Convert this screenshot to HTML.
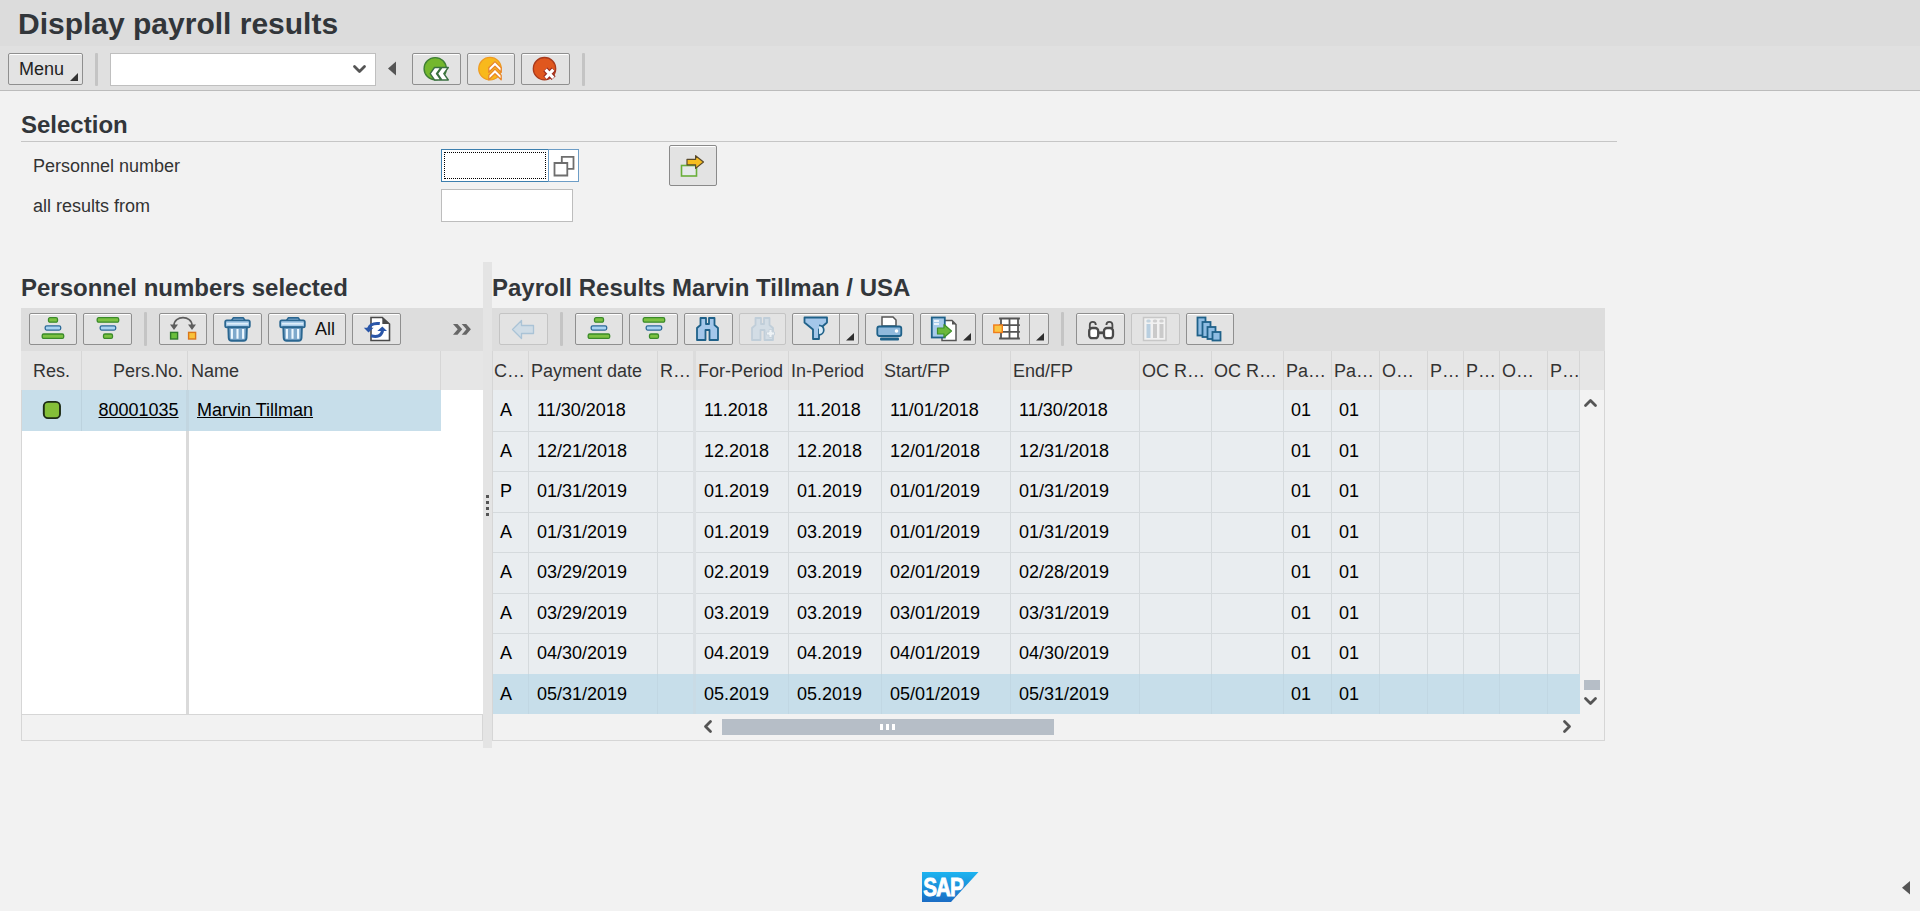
<!DOCTYPE html>
<html><head><meta charset="utf-8">
<style>
html,body{margin:0;padding:0;width:1920px;height:911px;overflow:hidden;background:#f2f2f2;font-family:"Liberation Sans",sans-serif;}
.a{position:absolute;}
.t{position:absolute;white-space:nowrap;line-height:20px;font-size:18px;}
.btn{position:absolute;box-sizing:border-box;border:1px solid #8f8f8f;background:#e3e3e3;border-radius:2px;box-shadow:inset 0 1px 0 #fff;}
.dis{border-color:#c4c4c4;box-shadow:none;}
.sep{position:absolute;width:3px;background:#c4c4c4;border-radius:1px;}
svg{position:absolute;overflow:visible}
.hd{color:#333;}
.dt{color:#000;}
</style></head>
<body>
<div class="a" style="left:0px;top:0px;width:1920px;height:46px;background:#dcdcdc"></div>
<div class="a" style="left:0px;top:46px;width:1920px;height:44px;background:#e0e0e0"></div>
<div class="a" style="left:0px;top:90px;width:1920px;height:1px;background:#bcbcbc"></div>
<div class="t" style="left:18px;top:7px;font-size:30px;line-height:34px;font-weight:bold;color:#32363a">Display payroll results</div>
<div class="btn" style="left:8px;top:53px;width:75px;height:32px;"></div>
<div class="t" style="left:19px;top:59px;color:#222">Menu</div>
<svg style="left:70px;top:73px" width="9" height="9" viewBox="0 0 9 9"><path d="M8 0 L8 8 L0 8 Z" fill="#333"/></svg>
<div class="sep" style="left:95px;top:53px;height:33px"></div>
<div class="a" style="left:110px;top:53px;width:266px;height:33px;box-sizing:border-box;border:1px solid #bfbfbf;background:#fff"></div>
<svg style="left:353px;top:65px" width="14" height="10" viewBox="0 0 14 10"><path d="M1.5 1.5 L6.5 6.5 L11.5 1.5" fill="none" stroke="#555" stroke-width="2.8" stroke-linecap="round" stroke-linejoin="round"/></svg>
<svg style="left:387px;top:61px" width="10" height="16" viewBox="0 0 10 16"><path d="M9 0.5 L9 14.5 L1 7.5 Z" fill="#555"/></svg>
<div class="btn" style="left:412px;top:53px;width:49px;height:32px;"></div>
<div class="btn" style="left:467px;top:53px;width:48px;height:32px;"></div>
<div class="btn" style="left:521px;top:53px;width:49px;height:32px;"></div>
<div class="sep" style="left:582px;top:53px;height:33px"></div>
<svg style="left:422px;top:55px" width="28" height="28" viewBox="0 0 28 28"><circle cx="13.2" cy="13.7" r="11.1" fill="#74b72d" stroke="#3f7f35" stroke-width="1.4"/>
<path d="M8.2 18.7 L12.5 12.5 L19 12.5 L14.5 18.7 L19 25 L12.5 25 Z M15.5 18.7 L19.8 12.5 L26.3 12.5 L21.8 18.7 L26.3 25 L19.8 25 Z" fill="#fff" stroke="#3a7040" stroke-width="1.4" stroke-linejoin="round"/></svg>
<svg style="left:476px;top:55px" width="28" height="28" viewBox="0 0 28 28"><circle cx="14" cy="13.7" r="11.3" fill="#f8b91c" stroke="#ee9a22" stroke-width="1.2"/>
<path d="M12.8 17.3 V12.8 L19 6.6 L25.2 12.8 V17.3 L19 11.2 Z M12.8 24.8 V20.3 L19 14.1 L25.2 20.3 V24.8 L19 18.7 Z" fill="#fff" stroke="#e8862a" stroke-width="1.3" stroke-linejoin="round"/></svg>
<svg style="left:531px;top:55px" width="28" height="28" viewBox="0 0 28 28"><circle cx="13.5" cy="13.7" r="11.2" fill="#e0571e" stroke="#a83a1c" stroke-width="1.3"/>
<path d="M14.3 14.3 L22.6 23.2 M22.6 14.3 L14.3 23.2" stroke="#9a2a1e" stroke-width="5.6"/>
<path d="M14.6 14.7 L22.3 22.8 M22.3 14.7 L14.6 22.8" stroke="#fff" stroke-width="3.2"/></svg>
<div class="t" style="left:21px;top:111px;font-size:24px;line-height:28px;font-weight:bold;color:#32363a">Selection</div>
<div class="a" style="left:21px;top:141px;width:1596px;height:1px;background:#c6c6c6"></div>
<div class="t" style="left:33px;top:156px;color:#333">Personnel number</div>
<div class="t" style="left:33px;top:196px;color:#333">all results from</div>
<div class="a" style="left:441px;top:149px;width:108px;height:33px;box-sizing:border-box;border:1px solid #3d7fae;background:#fff"></div>
<div class="a" style="left:444px;top:152px;width:102px;height:27px;box-sizing:border-box;border:1px dotted #000"></div>
<div class="a" style="left:548px;top:149px;width:31px;height:33px;box-sizing:border-box;border:1px solid #6d9dc6;background:#fff"></div>
<svg style="left:552px;top:154px" width="24" height="24" viewBox="0 0 24 24"><path d="M2.5 9 H15.3 V21.5 H2.5 Z" fill="none" stroke="#6e6e6e" stroke-width="1.8"/><path d="M9.8 8.5 V2.8 H21.5 V14.8 H15.8" fill="none" stroke="#6e6e6e" stroke-width="1.8"/></svg>
<div class="a" style="left:441px;top:189px;width:132px;height:33px;box-sizing:border-box;border:1px solid #bdbdbd;background:#fff"></div>
<div class="btn" style="left:669px;top:145px;width:48px;height:41px;border-color:#8a8a8a"></div>
<svg style="left:678px;top:152px" width="30" height="30" viewBox="0 0 30 30"><rect x="3.5" y="13.5" width="15" height="10.5" fill="#e6e9ec" stroke="#6aae3a" stroke-width="1.6"/>
<path d="M9 7.3 H17.6 V3.7 L25.5 10 L17.6 16.4 V12.8 H9 Z" fill="#f7bd1f" stroke="#5a4a2a" stroke-width="1.2" stroke-linejoin="round"/></svg>
<div class="t" style="left:21px;top:274px;font-size:24px;line-height:28px;font-weight:bold;color:#32363a">Personnel numbers selected</div>
<div class="a" style="left:21px;top:308px;width:462px;height:43px;background:#dddddd"></div>
<div class="btn" style="left:29px;top:313px;width:48px;height:32px;"></div>
<div class="btn" style="left:83px;top:313px;width:49px;height:32px;"></div>
<div class="sep" style="left:144px;top:312px;height:34px"></div>
<div class="btn" style="left:159px;top:313px;width:48px;height:32px;"></div>
<div class="btn" style="left:213px;top:313px;width:49px;height:32px;"></div>
<div class="btn" style="left:268px;top:313px;width:78px;height:32px;"></div>
<div class="btn" style="left:352px;top:313px;width:49px;height:32px;"></div>
<div class="t" style="left:315px;top:319px;color:#111">All</div>
<svg style="left:41px;top:316px" width="24" height="24" viewBox="0 0 24 24"><rect x="7.5" y="1.7" width="9" height="4.5" rx="1.5" fill="#7cc142" stroke="#3a8a29" stroke-width="1.3"/>
<rect x="4.2" y="9.8" width="15.5" height="4.3" rx="1.5" fill="#a9d3f2" stroke="#2c6a98" stroke-width="1.3"/>
<rect x="1.2" y="18" width="21.5" height="4.4" rx="1.5" fill="#7cc142" stroke="#3a8a29" stroke-width="1.3"/></svg>
<svg style="left:96px;top:316px" width="24" height="24" viewBox="0 0 24 24"><rect x="1.2" y="1.7" width="21.5" height="4.5" rx="1.5" fill="#7cc142" stroke="#3a8a29" stroke-width="1.3"/>
<rect x="4.2" y="9.8" width="15.5" height="4.3" rx="1.5" fill="#a9d3f2" stroke="#2c6a98" stroke-width="1.3"/>
<rect x="7.5" y="18" width="9" height="4.4" rx="1.5" fill="#7cc142" stroke="#3a8a29" stroke-width="1.3"/></svg>
<svg style="left:168px;top:315px" width="30" height="26" viewBox="0 0 30 26"><path d="M6 10.5 C6 0 24 0 24 10.5" fill="none" stroke="#5e5e5e" stroke-width="1.8"/>
<path d="M2 9.5 L10 9.5 L6 15 Z M20 9.5 L28 9.5 L24 15 Z" fill="#5e5e5e"/>
<rect x="2.6" y="17.4" width="7" height="6.6" fill="#6abf3c" stroke="#2f7a2a" stroke-width="1.4"/>
<rect x="20.6" y="17.4" width="7" height="6.6" fill="#f9c23a" stroke="#d9761a" stroke-width="1.4"/></svg>
<svg style="left:224px;top:317px" width="27" height="25" viewBox="0 0 27 25"><path d="M7.5 3.6 L9.3 0.9 H19.3 L21.1 3.6" fill="#9cc2e4" stroke="#2a6690" stroke-width="1.7" stroke-linejoin="round"/>
<rect x="1.2" y="3.3" width="24.6" height="7" rx="1.6" fill="#a9cbe8" stroke="#2a6690" stroke-width="1.8"/>
<path d="M2.8 6.8 H24.2" stroke="#e4f2fc" stroke-width="1.4"/>
<path d="M4.3 10.3 H22.9 L22.5 21 Q22.3 23.8 19.5 23.8 H7.7 Q4.9 23.8 4.7 21 Z" fill="#7fa9cc" stroke="#2a6690" stroke-width="1.9"/>
<path d="M7.9 12 V21.8 M13.5 12 V21.8 M19.1 12 V21.8" stroke="#eef8ff" stroke-width="2.1"/></svg>
<svg style="left:279px;top:317px" width="27" height="25" viewBox="0 0 27 25"><path d="M7.5 3.6 L9.3 0.9 H19.3 L21.1 3.6" fill="#9cc2e4" stroke="#2a6690" stroke-width="1.7" stroke-linejoin="round"/>
<rect x="1.2" y="3.3" width="24.6" height="7" rx="1.6" fill="#a9cbe8" stroke="#2a6690" stroke-width="1.8"/>
<path d="M2.8 6.8 H24.2" stroke="#e4f2fc" stroke-width="1.4"/>
<path d="M4.3 10.3 H22.9 L22.5 21 Q22.3 23.8 19.5 23.8 H7.7 Q4.9 23.8 4.7 21 Z" fill="#7fa9cc" stroke="#2a6690" stroke-width="1.9"/>
<path d="M7.9 12 V21.8 M13.5 12 V21.8 M19.1 12 V21.8" stroke="#eef8ff" stroke-width="2.1"/></svg>
<svg style="left:362px;top:316px" width="30" height="26" viewBox="0 0 30 26"><path d="M9 1.5 H20.3 L27.5 8 V24.5 H9 Z" fill="#fff" stroke="#4a4a4a" stroke-width="1.6" stroke-linejoin="miter"/>
<path d="M20.3 1.5 V8 H27.5 Z" fill="#4a4a4a"/>
<path d="M17.8 7.6 Q8.5 6.5 6.6 12.5" fill="none" stroke="#2a56a8" stroke-width="3"/>
<path d="M1.8 11.8 L11.6 11.8 L6.5 16.6 Z" fill="#2a56a8"/>
<path d="M9 19.8 Q18.5 22.5 20.6 14.8" fill="none" stroke="#2a56a8" stroke-width="3"/>
<path d="M15.3 15 L25 15 L20.3 10.6 Z" fill="#2a56a8"/></svg>
<svg style="left:452px;top:323px" width="20" height="13" viewBox="0 0 20 13"><path d="M1 1 H5.5 L10.2 6.3 L5.5 11.7 H1 L5.7 6.3 Z M9.7 1 H14.2 L18.9 6.3 L14.2 11.7 H9.7 L14.4 6.3 Z" fill="#666"/></svg>
<div class="a" style="left:21px;top:351px;width:462px;height:39px;background:#e6e6e6"></div>
<div class="a" style="left:81px;top:351px;width:1px;height:39px;background:#d6d6d6"></div>
<div class="a" style="left:187px;top:351px;width:1px;height:39px;background:#d6d6d6"></div>
<div class="a" style="left:440px;top:351px;width:1px;height:39px;background:#d6d6d6"></div>
<div class="t" style="left:33px;top:361px;color:#333">Res.</div>
<div class="t" style="left:113px;top:361px;color:#333">Pers.No.</div>
<div class="t" style="left:191px;top:361px;color:#333">Name</div>
<div class="a" style="left:21px;top:390px;width:420px;height:41px;background:#c7deea"></div>
<div class="a" style="left:81px;top:390px;width:1px;height:41px;background:#bcd2de"></div>
<div class="a" style="left:186px;top:390px;width:3px;height:41px;background:#c2d6e1"></div>
<svg style="left:41px;top:399px" width="22" height="22" viewBox="0 0 22 22"><rect x="2.8" y="2.9" width="16.2" height="16.2" rx="4.2" fill="#84bf38" stroke="#1e2c16" stroke-width="1.9"/></svg>
<div class="t" style="left:98.5px;top:400px;color:#000;text-decoration:underline">80001035</div>
<div class="t" style="left:197px;top:400px;color:#000;text-decoration:underline">Marvin Tillman</div>
<div class="a" style="left:21px;top:431px;width:462px;height:283px;background:#fff"></div>
<div class="a" style="left:441px;top:390px;width:42px;height:41px;background:#fff"></div>
<div class="a" style="left:186px;top:431px;width:3px;height:283px;background:#dadada"></div>
<div class="a" style="left:21px;top:714px;width:462px;height:27px;box-sizing:border-box;border:1px solid #d6d6d6;background:#f2f2f2"></div>
<div class="a" style="left:21px;top:390px;width:1px;height:324px;background:#d6d6d6"></div>
<div class="a" style="left:483px;top:262px;width:9px;height:486px;background:#e4e4e4"></div>
<div class="a" style="left:486px;top:495px;width:3px;height:3px;background:#555"></div>
<div class="a" style="left:486px;top:501px;width:3px;height:3px;background:#555"></div>
<div class="a" style="left:486px;top:507px;width:3px;height:3px;background:#555"></div>
<div class="a" style="left:486px;top:513px;width:3px;height:3px;background:#555"></div>
<div class="t" style="left:492px;top:274px;font-size:24px;line-height:28px;font-weight:bold;color:#32363a">Payroll Results Marvin Tillman / USA</div>
<div class="a" style="left:492px;top:308px;width:1113px;height:43px;background:#dddddd"></div>
<div class="btn dis" style="left:499px;top:313px;width:49px;height:32px;"></div>
<svg style="left:510px;top:318px" width="28" height="24" viewBox="0 0 28 24"><path d="M2.5 11.5 L11.5 2.5 V7.5 H23.5 V15.5 H11.5 V20.5 Z" fill="#cfdce6" stroke="#aac3d6" stroke-width="1.3" stroke-linejoin="round"/></svg>
<div class="sep" style="left:560px;top:312px;height:34px"></div>
<div class="btn" style="left:575px;top:313px;width:48px;height:32px;"></div>
<div class="btn" style="left:629px;top:313px;width:49px;height:32px;"></div>
<div class="btn" style="left:684px;top:313px;width:49px;height:32px;"></div>
<div class="btn dis" style="left:739px;top:313px;width:47px;height:32px;"></div>
<div class="btn" style="left:792px;top:313px;width:67px;height:32px;"></div>
<div class="a" style="left:839px;top:314px;width:1px;height:30px;background:#9a9a9a"></div>
<div class="btn" style="left:865px;top:313px;width:49px;height:32px;"></div>
<div class="btn" style="left:920px;top:313px;width:56px;height:32px;"></div>
<div class="btn" style="left:982px;top:313px;width:67px;height:32px;"></div>
<div class="a" style="left:1029px;top:314px;width:1px;height:30px;background:#9a9a9a"></div>
<div class="sep" style="left:1061px;top:312px;height:34px"></div>
<div class="btn" style="left:1076px;top:313px;width:49px;height:32px;"></div>
<div class="btn dis" style="left:1131px;top:313px;width:49px;height:32px;"></div>
<div class="btn" style="left:1186px;top:313px;width:48px;height:32px;"></div>
<svg style="left:587px;top:316px" width="24" height="24" viewBox="0 0 24 24"><rect x="7.5" y="1.7" width="9" height="4.5" rx="1.5" fill="#7cc142" stroke="#3a8a29" stroke-width="1.3"/>
<rect x="4.2" y="9.8" width="15.5" height="4.3" rx="1.5" fill="#a9d3f2" stroke="#2c6a98" stroke-width="1.3"/>
<rect x="1.2" y="18" width="21.5" height="4.4" rx="1.5" fill="#7cc142" stroke="#3a8a29" stroke-width="1.3"/></svg>
<svg style="left:642px;top:316px" width="24" height="24" viewBox="0 0 24 24"><rect x="1.2" y="1.7" width="21.5" height="4.5" rx="1.5" fill="#7cc142" stroke="#3a8a29" stroke-width="1.3"/>
<rect x="4.2" y="9.8" width="15.5" height="4.3" rx="1.5" fill="#a9d3f2" stroke="#2c6a98" stroke-width="1.3"/>
<rect x="7.5" y="18" width="9" height="4.4" rx="1.5" fill="#7cc142" stroke="#3a8a29" stroke-width="1.3"/></svg>
<svg style="left:696px;top:317px" width="24" height="25" viewBox="0 0 24 25"><path d="M4.5 1 H10 V7 H13 V1 H18.5 V8 L22 11 V23 H13.5 V13 H9.5 V23 H1 V11 L4.5 8 Z" fill="#a4c7ea" stroke="#1f6189" stroke-width="1.8" stroke-linejoin="round"/></svg>
<svg style="left:751px;top:317px" width="26" height="25" viewBox="0 0 26 25"><path d="M4.5 1 H10 V7 H13 V1 H18.5 V8 L22 11 V23 H13.5 V13 H9.5 V23 H1 V11 L4.5 8 Z" fill="#d3dde5" stroke="#c0ced9" stroke-width="1.8" stroke-linejoin="round"/><path d="M15.5 15 H18 V12.5 H21 V15 H23.5 V18 H21 V20.5 H18 V18 H15.5 Z" fill="#eef2f5" stroke="#c8d3dc" stroke-width="1"/></svg>
<svg style="left:803px;top:316px" width="26" height="26" viewBox="0 0 26 26"><path d="M1.5 1.5 H24 V6.5 L16 13.5 V23 H10 V13.5 L1.5 6.5 Z" fill="#a4c7ea" stroke="#1f6189" stroke-width="1.8" stroke-linejoin="round"/>
<path d="M16 9.3 A4.8 4.8 0 0 1 16 18.9" fill="#d8ebf8" stroke="#1f6189" stroke-width="1.7"/></svg>
<svg style="left:846px;top:333px" width="9" height="9" viewBox="0 0 9 9"><path d="M8 0 L8 7.5 L0 7.5 Z" fill="#2d2d2d"/></svg>
<svg style="left:876px;top:316px" width="27" height="26" viewBox="0 0 27 26"><path d="M6 1 H17 L20 4 V10 H6 Z" fill="#fff" stroke="#555" stroke-width="1.5"/>
<rect x="1.3" y="10.5" width="24" height="9.5" rx="2" fill="#8fb9dc" stroke="#1f6189" stroke-width="1.8"/>
<circle cx="20.5" cy="15" r="1.8" fill="#fff"/>
<rect x="4" y="21.5" width="19" height="3" rx="1" fill="#1f6189"/></svg>
<svg style="left:930px;top:316px" width="28" height="26" viewBox="0 0 28 26"><path d="M12 4.5 H22 L26 8.5 V24.5 H12 Z" fill="#fff" stroke="#555" stroke-width="1.5"/>
<path d="M22 4.5 V8.5 H26 Z" fill="#555"/>
<rect x="1.8" y="1.5" width="13" height="20" fill="#a7cbea" stroke="#1f6189" stroke-width="1.8"/>
<path d="M4 5 H9 M4 8 H9" stroke="#fff" stroke-width="1.4"/>
<path d="M7.5 12 H14 V8.5 L21.5 15 L14 21.5 V18 H7.5 Z" fill="#6bb83a" stroke="#3f8f2a" stroke-width="1.2" stroke-linejoin="round"/></svg>
<svg style="left:963px;top:333px" width="9" height="9" viewBox="0 0 9 9"><path d="M8 0 L8 7.5 L0 7.5 Z" fill="#2d2d2d"/></svg>
<svg style="left:992px;top:317px" width="28" height="24" viewBox="0 0 28 24"><rect x="9" y="1.5" width="17" height="20" fill="#fff"/>
<path d="M8 1.5 H27 M8 8.2 H27 M8 14.8 H27 M8 21.5 H27 M9 1.5 V21.5 M17.5 1.5 V21.5 M26 1.5 V21.5" stroke="#555" stroke-width="1.8" fill="none" stroke-linecap="square"/>
<rect x="1.8" y="8" width="8.5" height="7.5" fill="#fac645" stroke="#f07d1a" stroke-width="1.4"/></svg>
<svg style="left:1036px;top:333px" width="9" height="9" viewBox="0 0 9 9"><path d="M8 0 L8 7.5 L0 7.5 Z" fill="#2d2d2d"/></svg>
<svg style="left:1087px;top:320px" width="28" height="21" viewBox="0 0 28 21"><rect x="2.2" y="8" width="9" height="10.2" rx="3" fill="#fff" stroke="#4a4a4a" stroke-width="2.3"/>
<rect x="17" y="8" width="9" height="10.2" rx="3" fill="#fff" stroke="#4a4a4a" stroke-width="2.3"/>
<rect x="11" y="11.4" width="6.5" height="2.8" fill="#4a4a4a"/>
<path d="M2.8 8 V4.8 Q2.8 1.9 5.8 1.9 Q8.8 1.9 8.8 5" fill="none" stroke="#4a4a4a" stroke-width="1.8"/>
<path d="M25.4 8 V4.8 Q25.4 1.9 22.4 1.9 Q19.4 1.9 19.4 5" fill="none" stroke="#4a4a4a" stroke-width="1.8"/></svg>
<svg style="left:1142px;top:316px" width="26" height="26" viewBox="0 0 26 26"><rect x="1.5" y="1.5" width="22.5" height="23" fill="#f1f1f1" stroke="#c7c7c7" stroke-width="1.5"/>
<rect x="4.5" y="8" width="4" height="14" fill="#b9cfe0"/><rect x="11" y="8" width="4" height="14" fill="#cacaca"/><rect x="17.5" y="8" width="4" height="14" fill="#cacaca"/>
<rect x="4.3" y="3.6" width="4.4" height="3" rx="1.5" fill="#c3d3de"/><rect x="10.8" y="3.6" width="4.4" height="3" rx="1.5" fill="#cfcfcf"/><rect x="17.3" y="3.6" width="4.4" height="3" rx="1.5" fill="#cfcfcf"/></svg>
<svg style="left:1196px;top:316px" width="27" height="26" viewBox="0 0 27 26"><rect x="1.5" y="1.5" width="8" height="18" fill="#8fbde3" stroke="#1f6189" stroke-width="1.8"/>
<rect x="6.5" y="6" width="8" height="15" fill="#8fbde3" stroke="#1f6189" stroke-width="1.8"/>
<rect x="11.5" y="11" width="8" height="12" fill="#8fbde3" stroke="#1f6189" stroke-width="1.8"/>
<rect x="16.5" y="16" width="8" height="8.5" fill="#8fbde3" stroke="#1f6189" stroke-width="1.8"/></svg>
<div class="a" style="left:492px;top:351px;width:1113px;height:39px;background:#e6e6e6"></div>
<div class="a" style="left:528px;top:351px;width:1px;height:39px;background:#d6d6d6"></div>
<div class="a" style="left:657px;top:351px;width:1px;height:39px;background:#d6d6d6"></div>
<div class="a" style="left:693px;top:351px;width:3px;height:39px;background:#dcdcdc"></div>
<div class="a" style="left:788px;top:351px;width:1px;height:39px;background:#d6d6d6"></div>
<div class="a" style="left:881px;top:351px;width:1px;height:39px;background:#d6d6d6"></div>
<div class="a" style="left:1010px;top:351px;width:1px;height:39px;background:#d6d6d6"></div>
<div class="a" style="left:1139px;top:351px;width:1px;height:39px;background:#d6d6d6"></div>
<div class="a" style="left:1211px;top:351px;width:1px;height:39px;background:#d6d6d6"></div>
<div class="a" style="left:1283px;top:351px;width:1px;height:39px;background:#d6d6d6"></div>
<div class="a" style="left:1331px;top:351px;width:1px;height:39px;background:#d6d6d6"></div>
<div class="a" style="left:1379px;top:351px;width:1px;height:39px;background:#d6d6d6"></div>
<div class="a" style="left:1427px;top:351px;width:1px;height:39px;background:#d6d6d6"></div>
<div class="a" style="left:1463px;top:351px;width:1px;height:39px;background:#d6d6d6"></div>
<div class="a" style="left:1499px;top:351px;width:1px;height:39px;background:#d6d6d6"></div>
<div class="a" style="left:1547px;top:351px;width:1px;height:39px;background:#d6d6d6"></div>
<div class="a" style="left:1579px;top:351px;width:1px;height:39px;background:#d6d6d6"></div>
<div class="t" style="left:494px;top:361px;color:#333">C…</div>
<div class="t" style="left:531px;top:361px;color:#333">Payment date</div>
<div class="t" style="left:660px;top:361px;color:#333">R…</div>
<div class="t" style="left:698px;top:361px;color:#333">For-Period</div>
<div class="t" style="left:791px;top:361px;color:#333">In-Period</div>
<div class="t" style="left:884px;top:361px;color:#333">Start/FP</div>
<div class="t" style="left:1013px;top:361px;color:#333">End/FP</div>
<div class="t" style="left:1142px;top:361px;color:#333">OC R…</div>
<div class="t" style="left:1214px;top:361px;color:#333">OC R…</div>
<div class="t" style="left:1286px;top:361px;color:#333">Pa…</div>
<div class="t" style="left:1334px;top:361px;color:#333">Pa…</div>
<div class="t" style="left:1382px;top:361px;color:#333">O…</div>
<div class="t" style="left:1430px;top:361px;color:#333">P…</div>
<div class="t" style="left:1466px;top:361px;color:#333">P…</div>
<div class="t" style="left:1502px;top:361px;color:#333">O…</div>
<div class="t" style="left:1550px;top:361px;color:#333">P…</div>
<div class="a" style="left:492px;top:390px;width:1088px;height:324px;background:#e9edf0"></div>
<div class="t" style="left:500px;top:400px;color:#000">A</div>
<div class="t" style="left:537px;top:400px;color:#000">11/30/2018</div>
<div class="t" style="left:704px;top:400px;color:#000">11.2018</div>
<div class="t" style="left:797px;top:400px;color:#000">11.2018</div>
<div class="t" style="left:890px;top:400px;color:#000">11/01/2018</div>
<div class="t" style="left:1019px;top:400px;color:#000">11/30/2018</div>
<div class="t" style="left:1291px;top:400px;color:#000">01</div>
<div class="t" style="left:1339px;top:400px;color:#000">01</div>
<div class="a" style="left:492px;top:431px;width:1088px;height:1px;background:#d5dadd"></div>
<div class="t" style="left:500px;top:441px;color:#000">A</div>
<div class="t" style="left:537px;top:441px;color:#000">12/21/2018</div>
<div class="t" style="left:704px;top:441px;color:#000">12.2018</div>
<div class="t" style="left:797px;top:441px;color:#000">12.2018</div>
<div class="t" style="left:890px;top:441px;color:#000">12/01/2018</div>
<div class="t" style="left:1019px;top:441px;color:#000">12/31/2018</div>
<div class="t" style="left:1291px;top:441px;color:#000">01</div>
<div class="t" style="left:1339px;top:441px;color:#000">01</div>
<div class="a" style="left:492px;top:471px;width:1088px;height:1px;background:#d5dadd"></div>
<div class="t" style="left:500px;top:481px;color:#000">P</div>
<div class="t" style="left:537px;top:481px;color:#000">01/31/2019</div>
<div class="t" style="left:704px;top:481px;color:#000">01.2019</div>
<div class="t" style="left:797px;top:481px;color:#000">01.2019</div>
<div class="t" style="left:890px;top:481px;color:#000">01/01/2019</div>
<div class="t" style="left:1019px;top:481px;color:#000">01/31/2019</div>
<div class="t" style="left:1291px;top:481px;color:#000">01</div>
<div class="t" style="left:1339px;top:481px;color:#000">01</div>
<div class="a" style="left:492px;top:512px;width:1088px;height:1px;background:#d5dadd"></div>
<div class="t" style="left:500px;top:522px;color:#000">A</div>
<div class="t" style="left:537px;top:522px;color:#000">01/31/2019</div>
<div class="t" style="left:704px;top:522px;color:#000">01.2019</div>
<div class="t" style="left:797px;top:522px;color:#000">03.2019</div>
<div class="t" style="left:890px;top:522px;color:#000">01/01/2019</div>
<div class="t" style="left:1019px;top:522px;color:#000">01/31/2019</div>
<div class="t" style="left:1291px;top:522px;color:#000">01</div>
<div class="t" style="left:1339px;top:522px;color:#000">01</div>
<div class="a" style="left:492px;top:552px;width:1088px;height:1px;background:#d5dadd"></div>
<div class="t" style="left:500px;top:562px;color:#000">A</div>
<div class="t" style="left:537px;top:562px;color:#000">03/29/2019</div>
<div class="t" style="left:704px;top:562px;color:#000">02.2019</div>
<div class="t" style="left:797px;top:562px;color:#000">03.2019</div>
<div class="t" style="left:890px;top:562px;color:#000">02/01/2019</div>
<div class="t" style="left:1019px;top:562px;color:#000">02/28/2019</div>
<div class="t" style="left:1291px;top:562px;color:#000">01</div>
<div class="t" style="left:1339px;top:562px;color:#000">01</div>
<div class="a" style="left:492px;top:593px;width:1088px;height:1px;background:#d5dadd"></div>
<div class="t" style="left:500px;top:603px;color:#000">A</div>
<div class="t" style="left:537px;top:603px;color:#000">03/29/2019</div>
<div class="t" style="left:704px;top:603px;color:#000">03.2019</div>
<div class="t" style="left:797px;top:603px;color:#000">03.2019</div>
<div class="t" style="left:890px;top:603px;color:#000">03/01/2019</div>
<div class="t" style="left:1019px;top:603px;color:#000">03/31/2019</div>
<div class="t" style="left:1291px;top:603px;color:#000">01</div>
<div class="t" style="left:1339px;top:603px;color:#000">01</div>
<div class="a" style="left:492px;top:633px;width:1088px;height:1px;background:#d5dadd"></div>
<div class="t" style="left:500px;top:643px;color:#000">A</div>
<div class="t" style="left:537px;top:643px;color:#000">04/30/2019</div>
<div class="t" style="left:704px;top:643px;color:#000">04.2019</div>
<div class="t" style="left:797px;top:643px;color:#000">04.2019</div>
<div class="t" style="left:890px;top:643px;color:#000">04/01/2019</div>
<div class="t" style="left:1019px;top:643px;color:#000">04/30/2019</div>
<div class="t" style="left:1291px;top:643px;color:#000">01</div>
<div class="t" style="left:1339px;top:643px;color:#000">01</div>
<div class="a" style="left:492px;top:674px;width:1088px;height:1px;background:#d5dadd"></div>
<div class="a" style="left:528px;top:390px;width:1px;height:324px;background:#d5dadd"></div>
<div class="a" style="left:657px;top:390px;width:1px;height:324px;background:#d5dadd"></div>
<div class="a" style="left:693px;top:390px;width:3px;height:324px;background:#dde1e4"></div>
<div class="a" style="left:788px;top:390px;width:1px;height:324px;background:#d5dadd"></div>
<div class="a" style="left:881px;top:390px;width:1px;height:324px;background:#d5dadd"></div>
<div class="a" style="left:1010px;top:390px;width:1px;height:324px;background:#d5dadd"></div>
<div class="a" style="left:1139px;top:390px;width:1px;height:324px;background:#d5dadd"></div>
<div class="a" style="left:1211px;top:390px;width:1px;height:324px;background:#d5dadd"></div>
<div class="a" style="left:1283px;top:390px;width:1px;height:324px;background:#d5dadd"></div>
<div class="a" style="left:1331px;top:390px;width:1px;height:324px;background:#d5dadd"></div>
<div class="a" style="left:1379px;top:390px;width:1px;height:324px;background:#d5dadd"></div>
<div class="a" style="left:1427px;top:390px;width:1px;height:324px;background:#d5dadd"></div>
<div class="a" style="left:1463px;top:390px;width:1px;height:324px;background:#d5dadd"></div>
<div class="a" style="left:1499px;top:390px;width:1px;height:324px;background:#d5dadd"></div>
<div class="a" style="left:1547px;top:390px;width:1px;height:324px;background:#d5dadd"></div>
<div class="a" style="left:1579px;top:390px;width:1px;height:324px;background:#d5dadd"></div>
<div class="a" style="left:492px;top:674px;width:1088px;height:40px;background:#c7deea"></div>
<div class="a" style="left:528px;top:674px;width:1px;height:40px;background:#c1d7e3"></div>
<div class="a" style="left:657px;top:674px;width:1px;height:40px;background:#c1d7e3"></div>
<div class="a" style="left:693px;top:674px;width:3px;height:40px;background:#c9dbe5"></div>
<div class="a" style="left:788px;top:674px;width:1px;height:40px;background:#c1d7e3"></div>
<div class="a" style="left:881px;top:674px;width:1px;height:40px;background:#c1d7e3"></div>
<div class="a" style="left:1010px;top:674px;width:1px;height:40px;background:#c1d7e3"></div>
<div class="a" style="left:1139px;top:674px;width:1px;height:40px;background:#c1d7e3"></div>
<div class="a" style="left:1211px;top:674px;width:1px;height:40px;background:#c1d7e3"></div>
<div class="a" style="left:1283px;top:674px;width:1px;height:40px;background:#c1d7e3"></div>
<div class="a" style="left:1331px;top:674px;width:1px;height:40px;background:#c1d7e3"></div>
<div class="a" style="left:1379px;top:674px;width:1px;height:40px;background:#c1d7e3"></div>
<div class="a" style="left:1427px;top:674px;width:1px;height:40px;background:#c1d7e3"></div>
<div class="a" style="left:1463px;top:674px;width:1px;height:40px;background:#c1d7e3"></div>
<div class="a" style="left:1499px;top:674px;width:1px;height:40px;background:#c1d7e3"></div>
<div class="a" style="left:1547px;top:674px;width:1px;height:40px;background:#c1d7e3"></div>
<div class="t" style="left:500px;top:684px;color:#000">A</div>
<div class="t" style="left:537px;top:684px;color:#000">05/31/2019</div>
<div class="t" style="left:704px;top:684px;color:#000">05.2019</div>
<div class="t" style="left:797px;top:684px;color:#000">05.2019</div>
<div class="t" style="left:890px;top:684px;color:#000">05/01/2019</div>
<div class="t" style="left:1019px;top:684px;color:#000">05/31/2019</div>
<div class="t" style="left:1291px;top:684px;color:#000">01</div>
<div class="t" style="left:1339px;top:684px;color:#000">01</div>
<div class="a" style="left:492px;top:351px;width:1px;height:390px;background:#d6d6d6"></div>
<svg style="left:1584px;top:397px" width="14" height="11" viewBox="0 0 14 11"><path d="M1.5 8.5 L6.5 3.5 L11.5 8.5" fill="none" stroke="#555" stroke-width="2.8" stroke-linecap="round" stroke-linejoin="round"/></svg>
<div class="a" style="left:1584px;top:680px;width:16px;height:10px;background:#b6bec7"></div>
<svg style="left:1584px;top:696px" width="14" height="11" viewBox="0 0 14 11"><path d="M1.5 2.5 L6.5 7.5 L11.5 2.5" fill="none" stroke="#555" stroke-width="2.8" stroke-linecap="round" stroke-linejoin="round"/></svg>
<div class="a" style="left:492px;top:714px;width:1113px;height:27px;box-sizing:border-box;border:1px solid #d6d6d6;border-top:none;background:#f2f2f2"></div>
<div class="a" style="left:1604px;top:351px;width:1px;height:390px;background:#d6d6d6"></div>
<svg style="left:702px;top:719px" width="12" height="16" viewBox="0 0 12 16"><path d="M8.5 2.5 L3.5 7.5 L8.5 12.5" fill="none" stroke="#555" stroke-width="2.8" stroke-linecap="round" stroke-linejoin="round"/></svg>
<div class="a" style="left:722px;top:719px;width:332px;height:16px;background:#b6bec7"></div>
<div class="a" style="left:880px;top:724px;width:3px;height:6px;background:#fff"></div>
<div class="a" style="left:886px;top:724px;width:3px;height:6px;background:#fff"></div>
<div class="a" style="left:892px;top:724px;width:3px;height:6px;background:#fff"></div>
<svg style="left:1561px;top:719px" width="12" height="16" viewBox="0 0 12 16"><path d="M3.5 2.5 L8.5 7.5 L3.5 12.5" fill="none" stroke="#555" stroke-width="2.8" stroke-linecap="round" stroke-linejoin="round"/></svg>
<svg style="left:921px;top:871px" width="58" height="32" viewBox="0 0 58 32"><defs><linearGradient id="sg" x1="0" y1="0" x2="0" y2="1"><stop offset="0" stop-color="#1db4f0"/><stop offset="1" stop-color="#1a6cc4"/></linearGradient></defs>
<path d="M1 1 H57.5 L30 31 H1 Z" fill="url(#sg)"/>
<text x="0" y="0" transform="translate(2.2,25.3) scale(0.78,1)" font-family="Liberation Sans" font-weight="bold" font-size="26.5" fill="#fff" stroke="#fff" stroke-width="0.9" letter-spacing="-1.2">SAP</text></svg>
<svg style="left:1901px;top:880px" width="10" height="16" viewBox="0 0 10 16"><path d="M9 1 L9 14.5 L1 7.75 Z" fill="#555"/></svg>
</body></html>
